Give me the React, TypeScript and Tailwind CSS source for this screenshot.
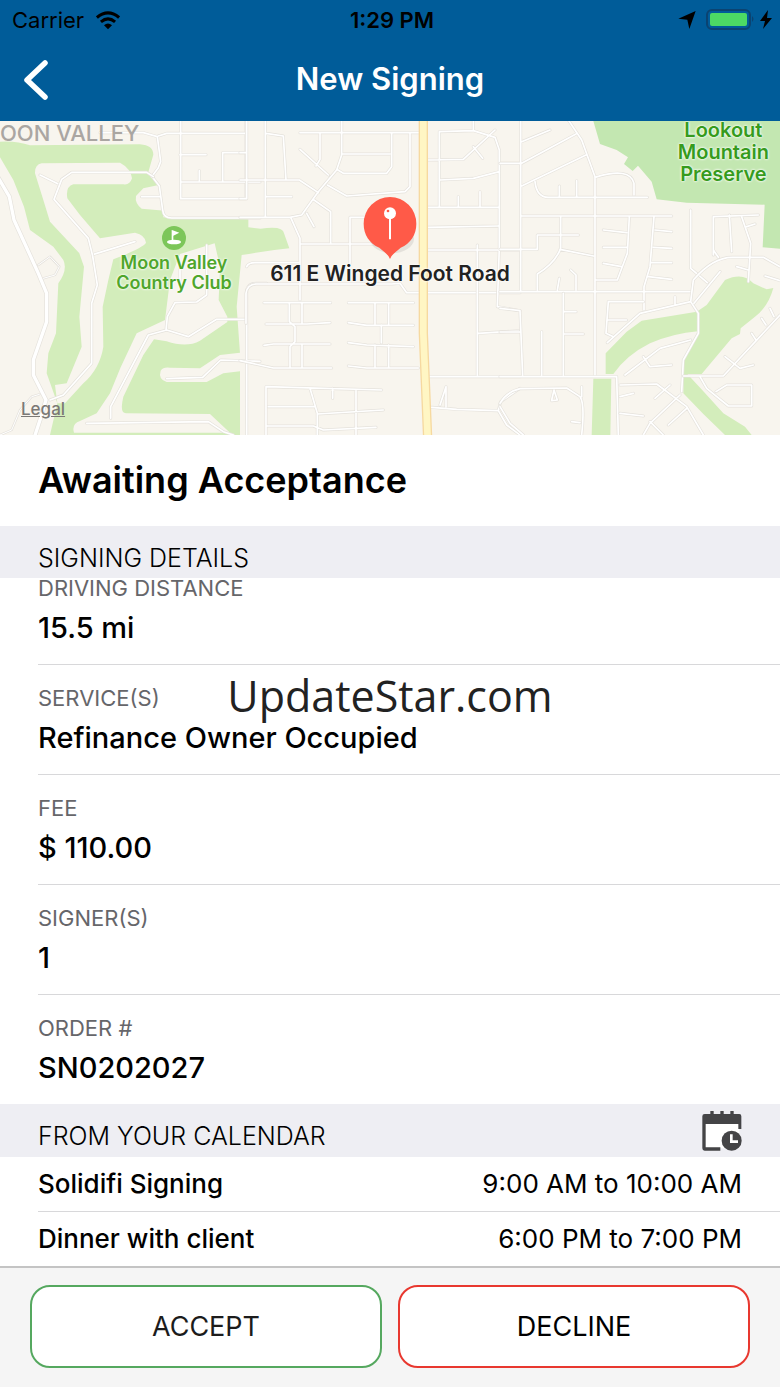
const details = [
  { label: "SERVICE(S)", value: "Refinance Owner Occupied" },
  { label: "FEE", value: "$ 110.00" },
  { label: "SIGNER(S)", value: "1" },
  { label: "ORDER #", value: "SN0202027" },
];

const events = [
  { title: "Solidifi Signing", time: "9:00 AM to 10:00 AM" },
  { title: "Dinner with client", time: "6:00 PM to 7:00 PM" },
];

function Roads({ d, width = 5 }: { d: string; width?: number }) {
  return (
    <g fill="none" strokeLinejoin="round" strokeLinecap="round">
      <path d={d} stroke="#e5e2dc" strokeWidth={width + 4} />
      <path d={d} stroke="#ffffff" strokeWidth={width} />
    </g>
  );
}

function MapDrawing() {
  return (
    <svg
      className="block h-full w-full"
      viewBox="0 3 2340 942"
      preserveAspectRatio="xMidYMid slice"
      aria-hidden="true"
    >
      <rect width="2340" height="960" fill="#f8f5ee" />

      {/* Golf course */}
      <path
        fill="#d3edbb"
        d="M0 65 Q50 62 90 76 L420 73 Q460 76 460 104 L444 160 L490 215 L490 292 L745 298 V322 L782 326 Q850 316 852 340 L868 385 Q800 392 725 405 L710 560 L720 700 V945 H150 L172 850 L140 760 L145 700 L168 640 L175 490 Q204 450 190 420 L160 380 L90 330 L72 260 L40 180 L0 112 Z"
      />
      <g fill="#f8f5ee">
        <path d="M125 130 L360 128 Q392 145 396 175 Q390 196 370 193 L220 193 Q196 200 202 235 L240 285 L300 355 L405 338 Q436 345 438 368 Q430 383 340 418 L325 480 L308 560 L310 680 Q300 745 250 790 L195 850 H172 L165 795 L200 790 L245 680 L238 590 L252 440 L238 400 L150 305 L130 240 L105 160 Q104 134 125 130 Z" />
        <path d="M408 228 L430 205 L490 192 L495 272 L425 266 Q404 250 408 228 Z" />
        <path d="M540 402 L644 370 L660 440 L656 540 L682 590 V606 L600 662 Q560 684 500 664 L462 658 L430 705 L370 830 Q358 880 378 880 L630 882 L690 938 H222 Q214 912 240 903 L290 880 L330 820 L362 742 L410 640 L495 600 L510 480 Z" />
        <path d="M482 752 Q490 740 510 743 L600 745 L660 705 L720 698 V754 L670 760 L620 786 L500 786 Q474 778 482 752 Z" />
      </g>

      {/* Preserve */}
      <path
        fill="#c3e7b1"
        d="M1780 3 L1800 72 L1850 90 L1884 112 L1872 132 L1898 153 L1914 137 L1955 185 L1970 238 L2060 248 L2294 254 L2288 382 L2340 386 V3 Z"
      />

      {/* Greenbelt */}
      <path
        fill="#d3edbb"
        d="M1817 700 L1880 635 L1925 602 L2090 575 L2120 555 L2175 480 Q2230 455 2260 490 L2300 508 L2320 504 Q2305 560 2265 590 L2222 625 L2220 642 L2195 655 L2105 762 H2062 L2110 814 L2170 880 L2235 920 L2255 945 H2175 L2110 882 L2050 820 L2050 720 L2094 634 Q2020 640 1950 670 Q1880 705 1840 762 H1817 Z M1780 776 H1834 L1831 945 H1775 Z"
      />

      {/* West neighbourhood roads */}
      <Roads d="M120 165 L175 192 M425 230 H482 M278 404 L405 365 M455 170 L474 145 L482 125 L472 50 L430 38 H300 M475 48 L500 40 H740 M738 0 V236 H542 V0 M540 104 H618 M668 185 V98 H735 M542 186 H780 M598 185 V152 M455 168 L478 198 L488 270 Q490 294 515 294 H780" />
      <Roads d="M440 157 H215 L185 178 L162 238 L265 355 L278 408 L292 495 L275 550 V730 L190 825 L150 840 M440 157 L460 170 M498 630 L502 590 L525 548 L590 546 L620 525 V375 M540 480 V440 M332 895 V860 L445 645 L500 630 L565 650 L650 598 H735 M500 776 L608 772 L662 720 L780 724 M260 910 L625 905 L670 935 L700 945 M740 945 V510 Q745 490 770 490 H800" />
      <Roads d="M115 435 L150 410 L178 440 L165 465 L130 475 M118 823 L95 830 L60 870 L35 930 L0 945" width={3} />
      <Roads d="M-10 165 L28 230 L42 300 L115 460 L140 520 V605 L100 720 V765 L138 840 L120 900 L102 955" width={10} />

      {/* Central roads */}
      <g transform="translate(720 0)">
        <Roads d="M0 98 H18 M20 0 V236 H0 M76 0 V290 M78 40 L130 48 L138 180 M180 38 H540 M180 88 L265 165 M240 40 V118 L228 138 M305 0 V105 L290 150 L235 215 L185 285 L150 292 H0 M0 180 H178 L235 218 M305 102 H450 M455 40 V140 L440 160 H310 L290 148 M510 40 V200 L495 215 L320 228 L262 195 M80 230 H155 M200 280 L222 320 M222 240 L272 275 V370 M152 292 L180 355 V540 M180 372 H450 M330 430 V292 H390 M20 440 Q25 428 45 428 H180 M18 610 V520 Q22 492 50 492 H455 L480 490 L500 518 H840" />
        <Roads d="M72 548 H272 M325 548 H520 M78 612 H200 L270 608 M325 608 L380 616 H520 M72 676 L100 672 H270 M325 668 L380 675 L520 680 M0 722 L100 744 H275 M325 738 L380 744 H535 M148 548 V605 L165 620 V665 L150 680 V744 M186 548 V612 M186 675 V744 M405 548 V612 M446 548 V612 M424 615 V668 M405 675 V744 M446 675 V744 M78 945 V800 L425 810 M85 860 H225 M210 805 L232 880 V945 M232 882 L430 870 M80 918 H220 L250 930 L408 922 M348 810 V945 M278 805 V835" />
        <Roads d="M565 120 L670 118 L765 30 M598 260 V35 L700 32 L765 52 L778 90 V380 L772 560 L840 572 M600 180 L700 175 L778 155 M700 80 L728 115 M700 0 V30 M780 130 H840 M565 262 H775 M655 260 V230 M720 260 V215 M565 322 L775 318 M565 390 H840 M712 375 V765 M715 640 L840 632 M565 770 H840 M575 862 L650 868 L775 872 L782 845 L840 805 M600 855 L618 800 V860 M775 872 L800 915 L840 945" />
      </g>

      {/* East roads */}
      <g transform="translate(1500 0)">
        <Roads d="M62 0 V515 M65 65 L150 30 M0 130 H65 L228 42 M65 198 L258 105 M205 0 L245 60 L285 170 V770 M285 172 Q390 140 402 190 V225 M105 185 Q110 232 145 232 H442 M178 230 V198 M230 230 V182 M65 288 H515 M0 388 H112 V345 H235 M182 290 V385 Q165 430 112 462 V510 M180 388 L280 408 M388 290 L382 400 L352 480 H288 M310 330 L380 338 M310 382 H380 M310 430 L365 440 M462 290 L450 440 L432 500 V570 M465 330 L515 335 M460 382 L515 385 M455 428 H515 M445 470 L515 478 M0 515 H575 M172 510 L178 475 M228 510 V465 L212 450 M572 270 V445 L622 488" />
        <Roads d="M0 565 L60 572 L68 765 M0 636 H60 M125 635 V765 M190 520 V765 M190 575 H228 M190 642 H250 M0 770 H350 L355 945 M430 545 H325 L318 640 L340 650 M325 600 H380 M322 668 L420 580 L572 545 L595 580 V640 L550 720 L545 815 M525 555 V530 M572 545 L580 480 Q640 410 700 412 H790 L840 440 M582 550 L660 455 M640 405 V290 L775 285 M640 390 L655 412 M688 285 L695 395 M725 290 L752 370 L745 485 M740 320 L765 312 M710 440 L745 450 M795 468 L840 482" />
        <Roads d="M375 765 L480 685 L572 660 M430 710 L450 740 L515 735 M550 768 H670 L840 585 M675 710 L720 745 L760 735 M785 595 L798 615 M755 640 L768 660 M810 565 L822 590 M600 770 L620 805 L685 858 H755 V795 H680 L648 815 M360 795 L470 792 L560 860 L610 945 M540 825 L450 910 L430 945 M465 835 L510 795 M505 915 L560 865 M360 880 L430 888 M360 830 L400 820 M450 905 L490 945 M0 850 Q20 815 60 806 L200 804 L240 830 Q255 850 245 945 M0 860 L30 910 L70 945 M155 840 L162 810 L172 840 L155 842 M215 905 L240 908 M245 830 V800" />
      </g>

      {/* Main north-south road */}
      <path d="M1270 0 V640 L1283 955" fill="none" stroke="#f6d9a0" strokeWidth="28" />
      <path d="M1270 0 V640 L1283 955" fill="none" stroke="#fff6c4" strokeWidth="20" />

      {/* Golf marker */}
      <circle cx="522" cy="354" r="36" fill="#7cc659" />
      <ellipse cx="522" cy="366" rx="21" ry="7" fill="#fff" />
      <path d="M516 330 L538 338 L520 347 V366 H515 V330 Z" fill="#fff" />

      {/* Address pin */}
      <ellipse cx="1176" cy="356" rx="66" ry="44" fill="#000" opacity="0.08" />
      <path
        d="M1170 417 C1164 402 1152 395 1138 383 C1108 370 1091 343 1091 311 A79 80 0 0 1 1249 311 C1249 343 1232 370 1202 383 C1188 395 1176 402 1170 417 Z"
        fill="#ff5a48"
      />
      <path d="M1170 296 V358" stroke="#fff" strokeWidth="6" />
      <circle cx="1170" cy="280" r="18" fill="#fff" />
      <circle cx="1164" cy="273" r="4" fill="#ff5a48" />
    </svg>
  );
}

function CalendarIcon() {
  return (
    <svg className="h-10 w-10" viewBox="0 0 120 120" aria-hidden="true">
      <path d="M8 36 H112 V112 H8 Z" fill="#fff" />
      <path
        fill="#444446"
        d="M8 9 H25 V0 H35 V9 H55 V0 H65 V9 H85 V0 H95 V9 H112 Q118 9 118 16 V54 H109 V39 H11 V109 H55 V119 H8 Q1 119 1 112 V16 Q1 9 8 9 Z"
      />
      <circle cx="89" cy="89" r="30" fill="#444446" />
      <path d="M88 70 V92 H108" fill="none" stroke="#fff" strokeWidth="8" />
    </svg>
  );
}

function StatusBar() {
  return (
    <div className="grid h-10 grid-cols-3 items-center pr-2 pl-3 text-[22px] leading-10 text-black">
      <div className="flex items-center gap-3">
        <span>Carrier</span>
        <svg className="h-5 w-6" viewBox="0 0 78 60" aria-hidden="true">
          <g fill="none" stroke="#000" strokeWidth="10">
            <path d="M3 22 Q39 -8 75 22" />
            <path d="M16 36 Q39 17 62 36" />
          </g>
          <path d="M26 47 Q39 36 52 47 L39 60 Z" />
        </svg>
      </div>
      <div className="text-center font-semibold">1:29 PM</div>
      <div className="flex items-center justify-end">
        <svg className="h-[18px] w-[18px]" viewBox="0 0 54 54" aria-hidden="true">
          <path d="M1 23 L53 0 L34 54 L28 26 Z" />
        </svg>
        <svg className="ml-2.5 h-6 w-13" viewBox="0 0 52 24" aria-hidden="true">
          <rect x="1" y="2" width="43" height="19" rx="5" fill="none" stroke="#0b4371" strokeWidth="2" />
          <rect x="4" y="5" width="37" height="13" rx="2" fill="#4cd964" />
          <path d="M46 8 Q49 11 46 14 Z" fill="#0b4371" />
        </svg>
        <svg className="ml-0.5 h-5 w-3" viewBox="0 0 12 20" aria-hidden="true">
          <path d="M8 0 L0 11 H5 L3 19 L12 8 H7 Z" />
        </svg>
      </div>
    </div>
  );
}

export default function App() {
  return (
    <div className="relative bg-white font-['Inter','Liberation_Sans',sans-serif] text-black">
      <header className="bg-[#005c99]">
        <StatusBar />
        <div className="grid h-[81px] grid-cols-[80px_1fr_80px] items-center pb-0.5">
          <button type="button" aria-label="Back" className="flex h-full items-center pl-6">
            <svg className="h-10 w-6" viewBox="0 0 24 40" aria-hidden="true">
              <path d="M21 3 L3 20 L21 37" fill="none" stroke="#fff" strokeWidth="5.5" strokeLinecap="round" strokeLinejoin="round" />
            </svg>
          </button>
          <h1 className="text-center text-[31px] font-semibold text-white">New Signing</h1>
        </div>
      </header>

      <section aria-label="Map" className="relative h-[314px] overflow-hidden">
        <MapDrawing />
        <span className="absolute top-0 left-0 text-[22px] leading-6 font-medium whitespace-nowrap text-[#aaa6a2]">
          OON VALLEY
        </span>
        <span className="absolute top-[132px] left-[174px] -translate-x-1/2 text-center text-lg leading-5 font-semibold whitespace-nowrap text-[#4fa62c] [text-shadow:0_0_2px_#fff,0_0_3px_#fff]">
          Moon Valley
          <br />
          Country Club
        </span>
        <span className="absolute top-[141px] left-1/2 -translate-x-1/2 text-[21px] leading-6 font-semibold whitespace-nowrap text-[#222] [text-shadow:0_0_2px_#fff,0_0_3px_#fff]">
          611 E Winged Foot Road
        </span>
        <span className="absolute -top-0.5 right-[11px] text-center text-xl leading-[22px] font-semibold text-[#369b1d] [text-shadow:0_0_2px_#fff,0_0_3px_#fff]">
          Lookout
          <br />
          Mountain
          <br />
          Preserve
        </span>
        <a href="#legal" className="absolute bottom-4 left-[21px] text-[17px] leading-5 font-medium text-[#7b7976] underline">
          Legal
        </a>
      </section>

      <main>
        <h2 className="px-[38px] text-4xl leading-[91px] font-semibold">Awaiting Acceptance</h2>

        <h3 className="bg-[#eeeef3] px-[38px] pt-3 text-[25px] leading-10 font-light">SIGNING DETAILS</h3>
        <dl className="pl-[38px]">
          <div className="border-b border-[#d8d8da] pb-4">
            <dt className="text-[22px] leading-5 text-[#66666a]">DRIVING DISTANCE</dt>
            <dd className="mt-2.5 text-[29px] leading-10 font-medium">15.5 mi</dd>
          </div>
          {details.map((item) => (
            <div key={item.label} className="border-b border-[#d8d8da] pt-[23px] pb-4 last:border-b-0">
              <dt className="text-[22px] leading-5 text-[#66666a]">{item.label}</dt>
              <dd className="mt-2.5 text-[29px] leading-10 font-medium">{item.value}</dd>
            </div>
          ))}
        </dl>

        <div className="flex items-start justify-between bg-[#eeeef3] pr-[38px] pb-px pl-[38px]">
          <h3 className="pt-3 text-[25px] leading-10 font-light">FROM YOUR CALENDAR</h3>
          <button type="button" aria-label="Open calendar" className="pt-[7px]">
            <CalendarIcon />
          </button>
        </div>
        <ul className="pl-[38px]">
          {events.map((event) => (
            <li
              key={event.title}
              className="flex justify-between border-b border-[#d8d8da] pr-[38px] text-[26px] leading-[54px] last:border-b-0"
            >
              <span className="font-medium">{event.title}</span>
              <span>{event.time}</span>
            </li>
          ))}
        </ul>
      </main>

      <footer className="grid grid-cols-2 gap-4 border-t-2 border-[#c4c4c4] bg-[#f5f5f5] px-[30px] pt-[17px] pb-[19px]">
        <button type="button" className="h-[83px] rounded-[20px] border-2 border-[#55a85f] bg-white pt-0.5 text-[27px] text-[#1c1c1c]">
          ACCEPT
        </button>
        <button type="button" className="h-[83px] rounded-[20px] border-2 border-[#e8382f] bg-white pt-0.5 text-[27px] text-black">
          DECLINE
        </button>
      </footer>

      <div className="pointer-events-none absolute top-[666px] left-1/2 -translate-x-1/2 font-['Open_Sans','Noto_Sans',sans-serif] text-[43px] leading-[60px] text-[#222]">
        UpdateStar.com
      </div>
    </div>
  );
}
